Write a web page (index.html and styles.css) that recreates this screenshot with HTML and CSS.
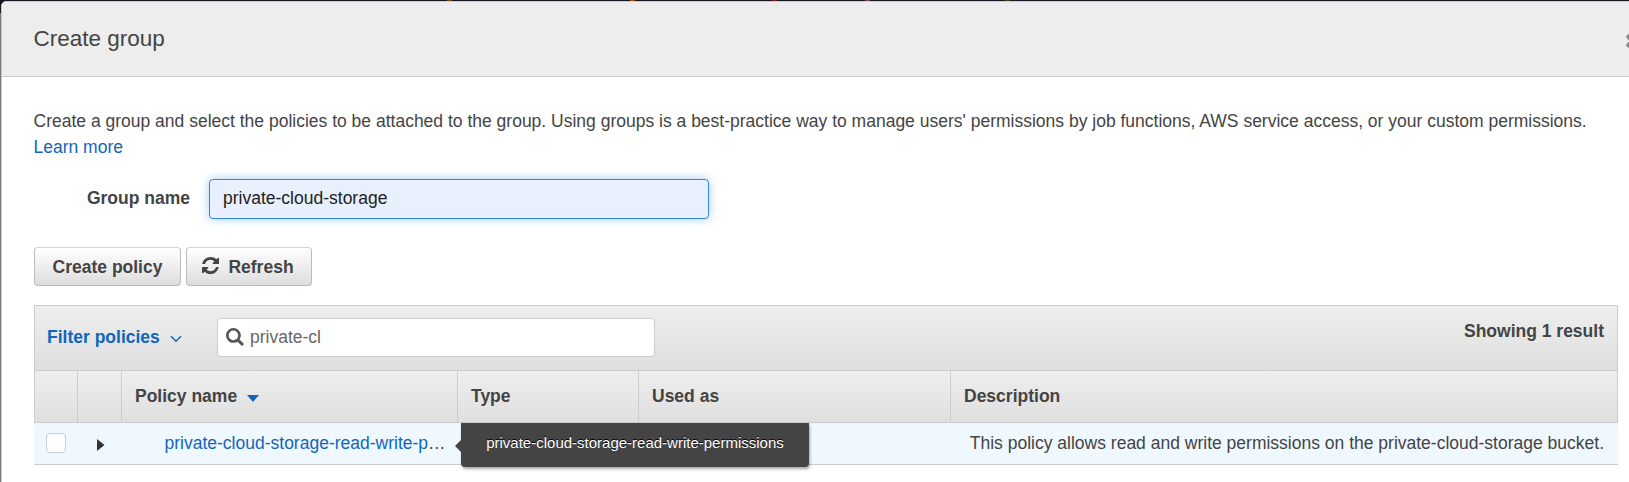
FILE: index.html
```html
<!DOCTYPE html>
<html lang="en">
<head>
<meta charset="utf-8">
<title>Create group</title>
<link rel="stylesheet" href="styles.css">
</head>
<body>
<div class="navbar"><i class="spark gold"></i><i class="spark orange"></i><i class="spark red"></i><i class="spark pink"></i><i class="spark green"></i></div>
<div class="modal">
  <header class="modal-header">
    <h1 class="title">Create group</h1>
    <svg class="close" width="14" height="14" viewBox="0 0 14 14"><path d="M2.6 2.8 11 11.2M11 2.8 2.6 11.2" stroke="#888" stroke-width="4.6" stroke-linecap="round"/></svg>
  </header>
  <main class="modal-body">
    <p class="intro"><span class="sentence">Create a group and select the policies to be attached to the group. Using groups is a best-practice way to manage users' permissions by job functions, AWS service access, or your custom permissions.</span><br><a class="link">Learn more</a></p>
    <div class="field">
      <label class="label" for="name">Group name</label>
      <input class="name-input" id="name" type="text" value="private-cloud-storage">
    </div>
    <div class="buttons">
      <button class="btn create">Create policy</button>
      <button class="btn refresh"><svg class="refresh-icon" width="17" height="17" viewBox="0 0 1536 1536"><path fill="#444" d="M1511 928q0 5-1 7-64 268-268 434.500T764 1536q-146 0-282.500-55T238 1324l-129 129q-19 19-45 19t-45-19-19-45V960q0-26 19-45t45-19h448q26 0 45 19t19 45-19 45l-137 137q71 66 161 102t187 36q134 0 250-65t186-179q11-17 53-117 8-23 30-23h192q13 0 22.500 9.500t9.500 22.500zm25-800v448q0 26-19 45t-45 19h-448q-26 0-45-19t-19-45 19-45l138-138Q969 256 768 256q-134 0-250 65T332 500q-11 17-53 117-8 23-30 23H50q-13 0-22.500-9.500T18 608v-7q65-268 270-434.500T768 0q146 0 284 55.500T1297 212l130-129q19-19 45-19t45 19 19 45z"/></svg><span>Refresh</span></button>
    </div>
    <section class="policies">
      <div class="toolbar">
        <a class="filter">Filter policies<svg class="chevron" width="12" height="8" viewBox="0 0 12 8"><path d="M1 1.2 6 6.2 11 1.2" fill="none" stroke="#1166bb" stroke-width="1.5"/></svg></a>
        <div class="search">
          <svg class="search-icon" width="18" height="18" viewBox="0 0 18 18"><circle cx="7.400" cy="7.400" r="6.100" fill="none" stroke="#555" stroke-width="2.600"/><path d="M11.600 11.600 17 17" stroke="#555" stroke-width="3"/></svg>
          <span>private-cl</span>
        </div>
        <strong class="count">Showing 1 result</strong>
      </div>
      <div class="row head">
        <div class="cell"></div>
        <div class="cell"></div>
        <div class="cell">Policy name<svg class="sort" width="12" height="7" viewBox="0 0 12 7"><path d="M0 0H12L6 7z" fill="#1166bb"/></svg></div>
        <div class="cell">Type</div>
        <div class="cell">Used as</div>
        <div class="cell">Description</div>
      </div>
      <div class="row item">
        <div class="check-cell"><span class="checkbox"></span></div>
        <div class="expand-cell"><svg width="8" height="12" viewBox="0 0 8 12"><path d="M0 0 7.5 6 0 12z" fill="#333"/></svg></div>
        <div class="name-cell"><a class="link">private-cloud-storage-read-write-p</a>…<div class="tooltip">private-cloud-storage-read-write-permissions</div></div>
        <div></div>
        <div></div>
        <div class="desc-cell"><span>This policy allows read and write permissions on the private-cloud-storage bucket.</span></div>
      </div>
    </section>
  </main>
</div>
</body>
</html>
```
FILE: styles.css
```css
* { box-sizing: border-box; }
body {
  margin: 0;
  height: 482px;
  overflow: hidden;
  background: #777;
  color: #444;
  font: 17.5px/26px "Liberation Sans", Arial, sans-serif;
}
.navbar { position: absolute; inset: 0 0 auto 0; height: 13px; background: #151723; }
.spark { position: absolute; top: 0; width: 5px; height: 1px; }
.gold { left: 447px; background: #6b4c17; }
.orange { left: 630px; background: #9b521d; }
.red { left: 772px; background: #71212a; }
.pink { left: 865px; background: #79445f; }
.green { left: 1005px; background: #35451d; }
.modal {
  position: relative;
  width: 1660px;
  height: 500px;
  margin: 1px 0 0 1px;
  border: 1px solid #ccc;
  border-radius: 5px 5px 0 0;
  background: #fff;
  overflow: hidden;
}
.modal-header {
  display: flex;
  align-items: center;
  justify-content: space-between;
  height: 75px;
  padding: 0 20px 0 31.5px;
  background: #ededed;
  border-bottom: 1px solid #ccc;
}
.title { margin: 0; font-size: 22.5px; font-weight: 400; line-height: 28px; }
.close { margin-top: 3px; flex: none; }
.modal-body { width: 1616px; padding: 31px 0 0 32px; }
.intro { margin: 0 0 0 -.5px; white-space: nowrap; }
.link { color: #1166bb; }
.field { display: flex; align-items: center; height: 40px; margin-top: 19px; }
.label { width: 156px; padding-bottom: 2px; font-weight: 700; text-align: right; }
.name-input {
  width: 500px;
  height: 40px;
  margin-left: 19px;
  padding: 0 13px 2px;
  border: 1px solid #3388dd;
  border-radius: 4px;
  outline: 0;
  background: #e8f0fe;
  color: #222;
  font: inherit;
  box-shadow: 0 0 10px rgba(51, 136, 221, .45);
}
.buttons { display: flex; gap: 5px; margin-top: 28px; }
.btn {
  display: flex;
  align-items: center;
  justify-content: center;
  height: 39px;
  padding: 0;
  border: 1px solid #bbb;
  border-top-color: #d5d5d5;
  border-radius: 4px;
  background: linear-gradient(#fff, #ddd);
  color: #444;
  font: 700 17.5px/26px "Liberation Sans", Arial, sans-serif;
}
.create { width: 147px; }
.refresh { width: 126px; padding-right: 2px; gap: 9px; }
.refresh-icon { margin-top: -2px; }
.policies { width: 1584px; margin-top: 19px; }
.toolbar {
  display: flex;
  height: 65px;
  padding: 12px 13px 0 12px;
  border: 1px solid #ccc;
  border-bottom: 0;
  background: linear-gradient(#eee, #dfdfdf);
}
.filter { width: 170px; padding-top: 6px; color: #1166bb; font-weight: 700; }
.chevron { margin-left: 10px; }
.search {
  display: flex;
  align-items: center;
  width: 438px;
  height: 39px;
  padding: 0 8px 2px;
  gap: 6px;
  border: 1px solid #ccc;
  border-radius: 4px;
  background: #fff;
  color: #666;
}
.count { margin-left: auto; }
.row { display: grid; grid-template-columns: 43px 44px 336px 181px 312px 668px; }
.head {
  height: 53px;
  border: solid #ccc;
  border-width: 1px 0;
  background: linear-gradient(#eee, #dfdfdf);
  font-weight: 700;
}
.cell { padding: 12px 0 0 13px; border-left: 1px solid #ccc; }
.cell:last-child { border-right: 1px solid #ccc; }
.sort { margin: 0 0 -1px 10px; position: relative; top: -1px; }
.item { height: 42px; background: #f0f8ff; border-bottom: 1px solid #ccc; }
.check-cell { padding: 10px 0 0 12px; }
.checkbox { display: block; width: 20px; height: 20px; border: 1px solid #ccc; border-radius: 4px; background: #fff; }
.expand-cell { display: flex; align-items: center; padding: 2px 0 0 20px; }
.name-cell { position: relative; padding: 7px 0 0 43.5px; white-space: nowrap; }
.tooltip {
  position: absolute;
  top: 0;
  left: 340px;
  width: 348px;
  height: 44px;
  border-radius: 0 0 4px 4px;
  background: #444;
  color: #fff;
  font-size: 15px;
  line-height: 40px;
  text-align: center;
  text-shadow: 0 -1px 0 #000;
  box-shadow: 1px 2px 3px rgba(0, 0, 0, .35);
}
.tooltip::before {
  content: "";
  position: absolute;
  left: -6px;
  top: 17px;
  border: solid transparent;
  border-width: 6px 6px 6px 0;
  border-right-color: #444;
}
.desc-cell { padding: 7px 14px 0 0; text-align: right; white-space: nowrap; }
```
